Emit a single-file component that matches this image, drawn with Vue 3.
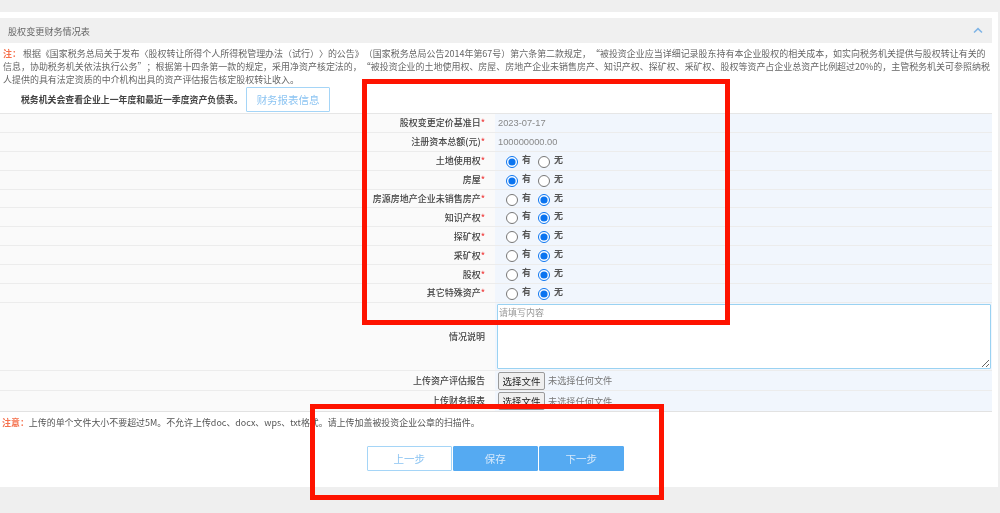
<script setup>
const rows = [
  { label: '股权变更定价基准日', req: true, text: '2023-07-17' },
  { label: '注册资本总额(元)', req: true, text: '100000000.00' },
  { label: '土地使用权', req: true, has: true },
  { label: '房屋', req: true, has: true },
  { label: '房源房地产企业未销售房产', req: true, has: false },
  { label: '知识产权', req: true, has: false },
  { label: '探矿权', req: true, has: false },
  { label: '采矿权', req: true, has: false },
  { label: '股权', req: true, has: false },
  { label: '其它特殊资产', req: true, has: false }
]
</script>

<template>
  <div class="page">
    <main class="panel">
      <section class="section">
        <header class="section-head">
          <h2>股权变更财务情况表</h2>
          <svg class="chevron" width="10" height="7" viewBox="0 0 10 7"><path d="M1 5.5 5 1.6 9 5.5" fill="none" stroke="#7fb4e6" stroke-width="1.5"/></svg>
        </header>
        <p class="note"><b>注：</b> 根据《国家税务总局关于发布〈股权转让所得个人所得税管理办法（试行）〉的公告》（国家税务总局公告2014年第67号）第六条第二款规定，“被投资企业应当详细记录股东持有本企业股权的相关成本，如实向税务机关提供与股权转让有关的<br>信息，协助税务机关依法执行公务”；根据第十四条第一款的规定，采用净资产核定法的，“被投资企业的土地使用权、房屋、房地产企业未销售房产、知识产权、探矿权、采矿权、股权等资产占企业总资产比例超过20%的，主管税务机关可参照纳税<br>人提供的具有法定资质的中介机构出具的资产评估报告核定股权转让收入。</p>
        <div class="info">
          <strong>税务机关会查看企业上一年度和最近一季度资产负债表。</strong>
          <button class="btn btn-outline">财务报表信息</button>
        </div>
        <div class="table">
          <div v-for="(r, i) in rows" :key="r.label" class="row">
            <div class="label">{{ r.label }}<i v-if="r.req">*</i></div>
            <div class="value">
              <span v-if="r.text" class="plain">{{ r.text }}</span>
              <template v-else>
                <label class="radio"><input type="radio" :name="'r' + i" :checked="r.has"><span>有</span></label>
                <label class="radio"><input type="radio" :name="'r' + i" :checked="!r.has"><span>无</span></label>
              </template>
            </div>
          </div>
          <div class="row row-area">
            <div class="label">情况说明</div>
            <div class="value"><textarea placeholder="请填写内容"></textarea></div>
          </div>
          <div class="row row-file">
            <div class="label">上传资产评估报告</div>
            <div class="value"><button class="file-btn">选择文件</button><span class="file-name">未选择任何文件</span></div>
          </div>
          <div class="row row-file">
            <div class="label">上传财务报表</div>
            <div class="value"><button class="file-btn">选择文件</button><span class="file-name">未选择任何文件</span></div>
          </div>
        </div>
        <p class="warn"><b>注意：</b>上传的单个文件大小不要超过5M。不允许上传doc、docx、wps、txt格式。请上传加盖被投资企业公章的扫描件。</p>
        <div class="actions">
          <button class="btn btn-outline">上一步</button>
          <button class="btn btn-solid">保存</button>
          <button class="btn btn-solid">下一步</button>
        </div>
      </section>
    </main>
    <div class="mark mark-a"></div>
    <div class="mark mark-b"></div>
  </div>
</template>

<style>
html, body { margin: 0; background: #efefef; }
</style>

<style scoped>
.page {
  position: relative;
  height: 513px;
  overflow: hidden;
  padding-top: 12px;
  box-sizing: border-box;
  background: #efefef;
  font-family: "Noto Sans CJK SC", "Liberation Sans", sans-serif;
  font-size: 9px;
  color: #555;
  text-spacing-trim: space-all;
}
.panel {
  width: 998px;
  height: 475px;
  padding-top: 6px;
  box-sizing: border-box;
  background: #fff;
  filter: blur(0.35px);
}
.section { width: 992px; }
.section-head {
  height: 25px;
  display: flex;
  align-items: center;
  justify-content: space-between;
  padding: 0 9px 0 8px;
  background: #f0f0f0;
}
.section-head h2 { margin: 0; font-size: 9.1px; font-weight: 400; color: #666; }
.note {
  margin: 0;
  padding: 4px 3px 0;
  height: 38px;
  font-size: 8.97px;
  line-height: 13px;
  color: #666;
  white-space: nowrap;
}
.note b, .warn b { color: #f5714d; font-weight: 700; }
.info {
  height: 28px;
  display: flex;
  align-items: center;
  padding-left: 21px;
  gap: 3px;
  border-bottom: 1px solid #e6e6e6;
}
.info strong { color: #444; font-size: 8.9px; font-weight: 700; }
.btn {
  width: 84.5px;
  height: 25px;
  padding: 0;
  box-sizing: border-box;
  font-family: inherit;
  font-size: 10.5px;
  border-radius: 1px;
}
.btn-outline { background: #fff; border: 1px solid #a5d5f7; color: #8cc4f2; }
.btn-solid { background: #55aaf2; border: 1px solid #55aaf2; color: #d5e9fb; }
.table { border-bottom: 1px solid #e2e2e2; }
.row {
  display: flex;
  height: 18.9px;
  box-sizing: border-box;
  border-bottom: 1px solid #ececec;
}
.row-area { height: 68px; }
.row-file { height: 20px; }
.row:last-child { border-bottom: 0; }
.label {
  width: 495px;
  flex: none;
  box-sizing: border-box;
  padding-right: 10px;
  display: flex;
  align-items: center;
  justify-content: flex-end;
  background: #fafafa;
  font-weight: 500;
  color: #444;
}
.label i { color: #f04545; font-style: normal; }
.value {
  flex: 1;
  display: flex;
  align-items: center;
  padding-left: 3px;
  background: #f1f6fd;
  color: #777;
}
.plain { color: #888; font-size: 9.3px; font-family: "Liberation Sans", sans-serif; }
.radio { display: flex; align-items: center; width: 34px; margin-left: 8px; margin-right: -8px; font-weight: 700; color: #555; }
.radio + .radio { margin-left: 6px; }
.radio input { width: 12px; height: 12px; margin: 2px 4px 0 0; accent-color: #0a74f0; }
.radio span { margin-top: -3px; }
.row-area .value { padding-left: 2px; }
textarea {
  width: 494px;
  height: 65px;
  box-sizing: border-box;
  margin: 0;
  padding: 1px 1px;
  background: #fff;
  border: 1px solid #9ad2f2;
  border-radius: 1px;
  font-family: inherit;
  font-size: 9px;
  outline: 0;
}
textarea::placeholder { color: #999; }
.file-btn {
  width: 47px;
  height: 18px;
  padding: 0;
  margin-top: 1px;
  background: #efefef;
  border: 1px solid #9a9a9a;
  border-radius: 2px;
  font-family: inherit;
  font-size: 9.5px;
  color: #222;
}
.file-name { margin-left: 3px; color: #777; font-size: 9.2px; }
.warn {
  margin: 0;
  padding: 4px 2px 0;
  height: 30px;
  font-size: 8.95px;
  line-height: 13px;
  color: #555;
}
.actions {
  display: flex;
  gap: 1.5px;
  padding-left: 367px;
}
.mark {
  position: absolute;
  box-sizing: border-box;
  border: 5px solid #fe1300;
  pointer-events: none;
}
.mark-a { left: 362px; top: 79px; width: 368px; height: 246px; }
.mark-b { left: 310px; top: 404px; width: 354px; height: 96px; }
.chevron { display: block; }
</style>
